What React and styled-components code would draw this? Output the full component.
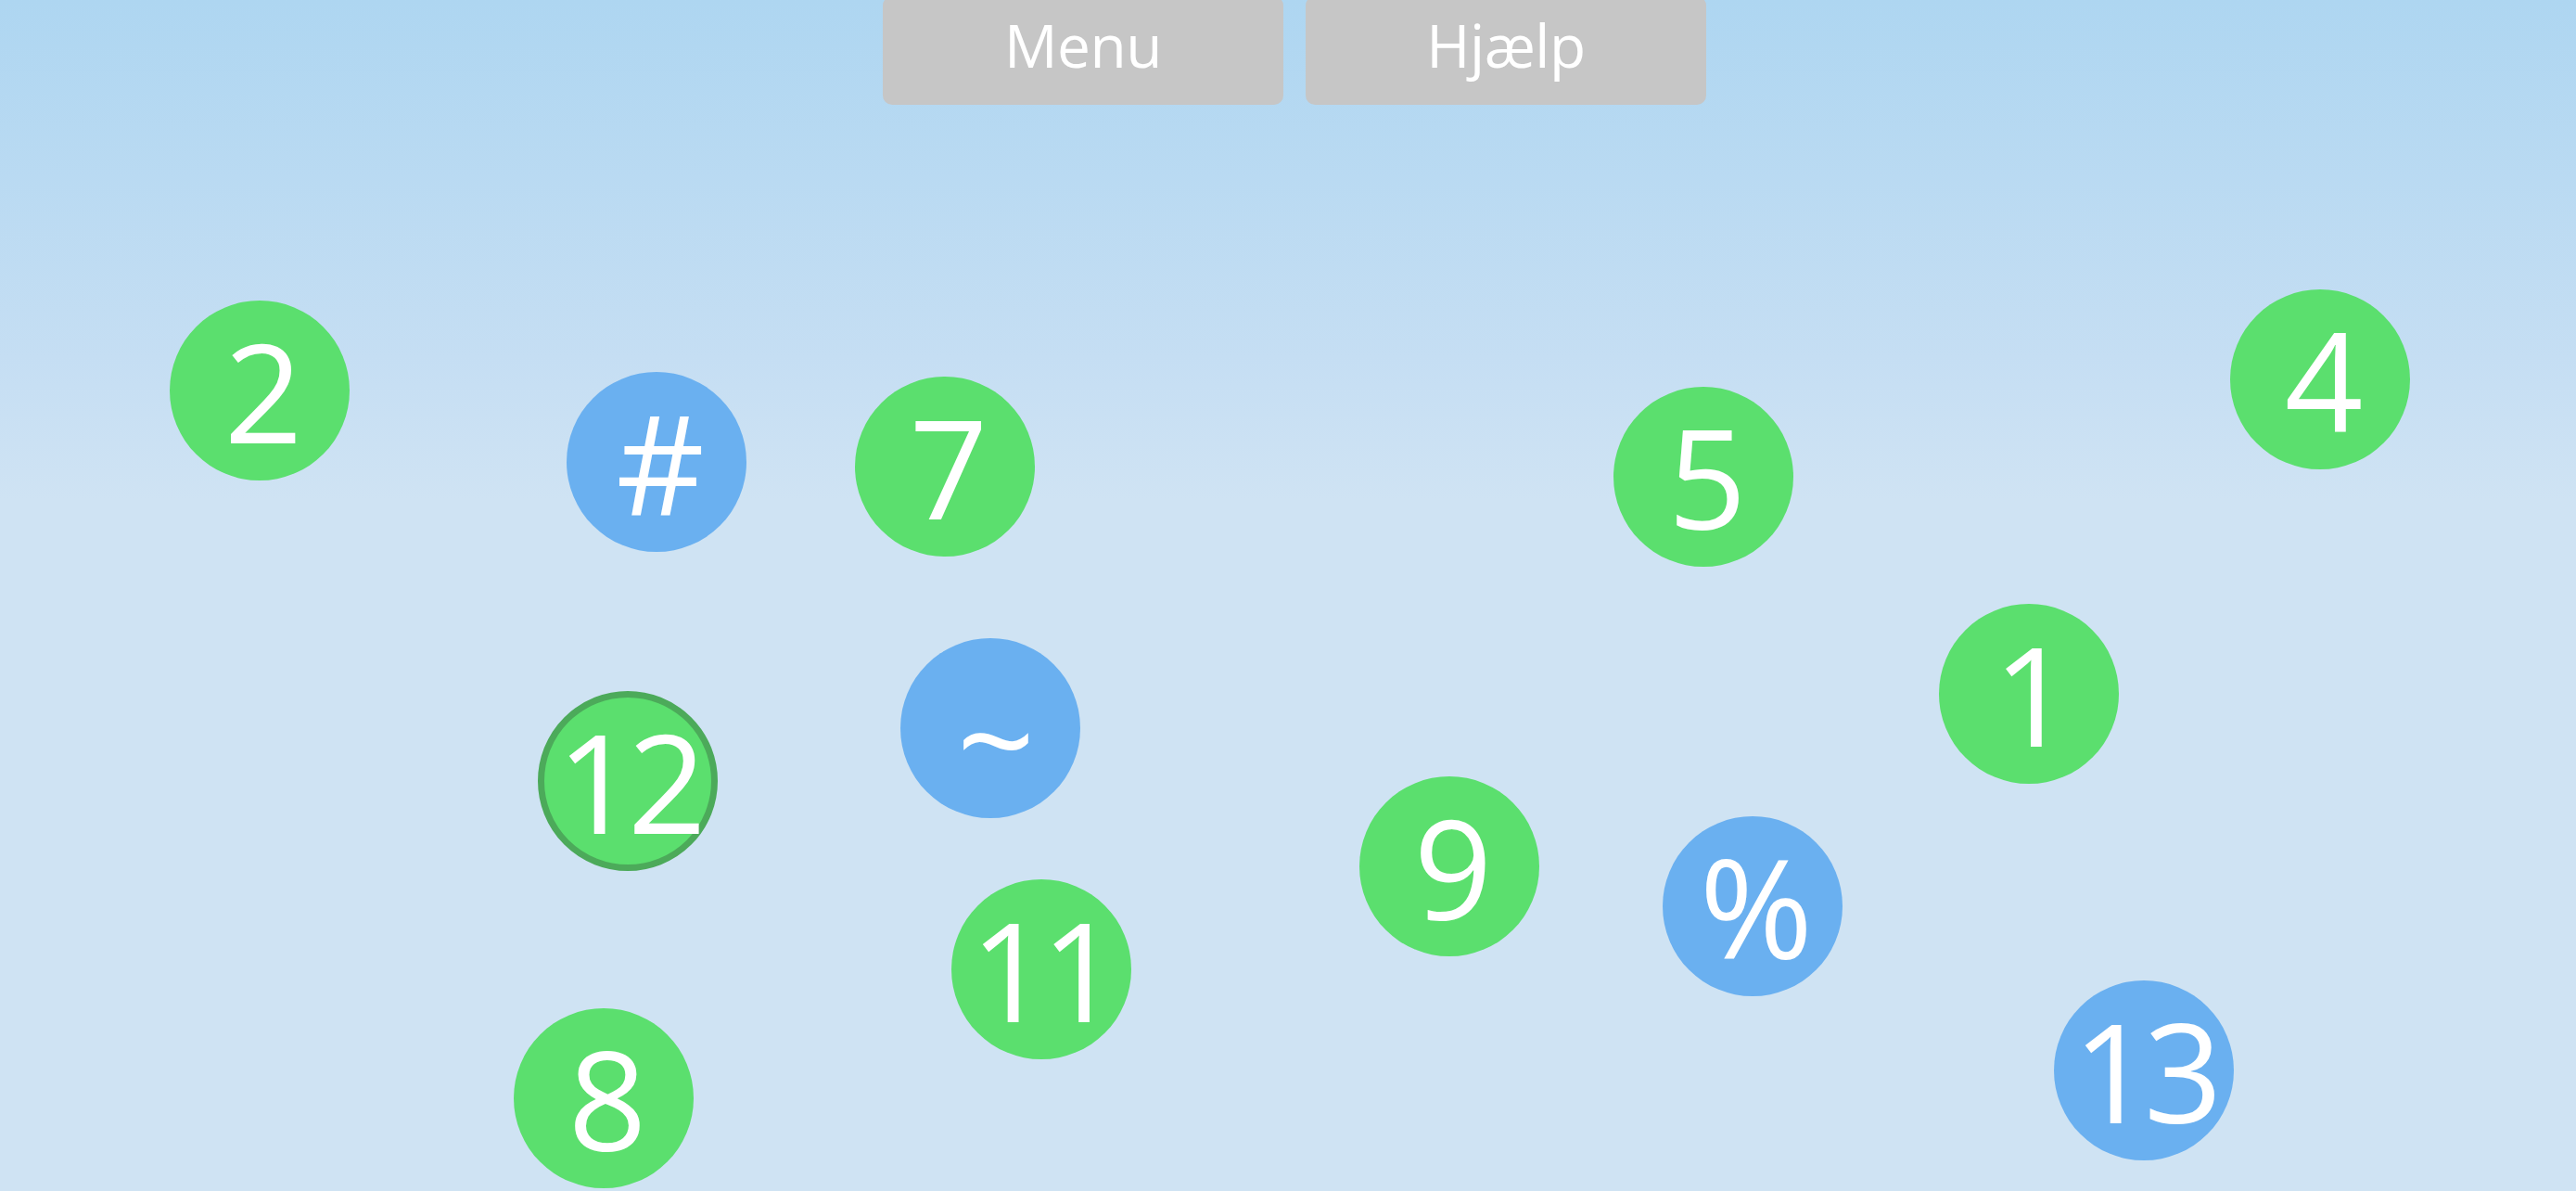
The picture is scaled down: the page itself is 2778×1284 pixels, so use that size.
import React from "react";
import styled, { createGlobalStyle } from "styled-components";

const GlobalStyle = createGlobalStyle`
  html, body {
    margin: 0;
    padding: 0;
    width: 100%;
    height: 100%;
    overflow: hidden;
  }
  #root {
    width: 100%;
    height: 100%;
  }
`;

const Page = styled.div`
  position: relative;
  width: 100vw;
  height: 100vh;
  overflow: hidden;
  background: linear-gradient(
    to bottom,
    #aed6f1 0%,
    #c5def3 30%,
    #cfe3f3 42%,
    #cfe3f3 100%
  );
  font-family: "Open Sans", "DejaVu Sans", sans-serif;
`;

const TopBar = styled.nav`
  position: relative;
  z-index: 2;
  display: flex;
  justify-content: center;
  gap: 24px;
  padding-left: 14px;
`;

const MenuButton = styled.button`
  width: 432px;
  height: 117px;
  margin-top: -4px;
  border: none;
  border-radius: 10px;
  background: #c6c6c6;
  color: #ffffff;
  font-family: "Open Sans", "DejaVu Sans", sans-serif;
  font-size: 64px;
  font-weight: 400;
  letter-spacing: -0.5px;
  display: flex;
  align-items: center;
  justify-content: center;
  padding: 0 0 12px;
  cursor: pointer;
`;

const Canvas = styled.div`
  position: absolute;
  inset: 0;
`;

const Bubble = styled.div`
  position: absolute;
  width: 194px;
  height: 194px;
  margin: -97px 0 0 -97px;
  box-sizing: border-box;
  border-radius: 50%;
  background: ${(p) => (p.$kind === "op" ? "#6ab0f0" : "#5bdf6e")};
  border: ${(p) => (p.$selected ? "7px solid #4caa5a" : "none")};
  display: flex;
  align-items: center;
  justify-content: center;
  color: #ffffff;
  font-family: "Open Sans", "DejaVu Sans", sans-serif;
  font-size: 148px;
  font-weight: 400;
  line-height: 1;
  letter-spacing: -8px;
  user-select: none;
`;

const Label = styled.span`
  display: block;
  transform: translate(${(p) => p.$dx || 0}px, ${(p) => p.$dy || 0}px);
`;

const bubbles = [
  { t: "2", x: 280, y: 421, kind: "num" },
  { t: "#", x: 708, y: 498, kind: "op" },
  { t: "7", x: 1019, y: 503, kind: "num" },
  { t: "~", x: 1068, y: 785, kind: "op", dy: 10, dx: 2 },
  { t: "12", x: 677, y: 842, kind: "num", selected: true },
  { t: "11", x: 1123, y: 1045, kind: "num" },
  { t: "8", x: 651, y: 1184, kind: "num" },
  { t: "9", x: 1563, y: 934, kind: "num" },
  { t: "5", x: 1837, y: 514, kind: "num" },
  { t: "%", x: 1890, y: 977, kind: "op" },
  { t: "1", x: 2188, y: 748, kind: "num" },
  { t: "4", x: 2502, y: 409, kind: "num" },
  { t: "13", x: 2312, y: 1154, kind: "op" },
];

export default function App() {
  return (
    <Page>
      <GlobalStyle />
      <Canvas>
        {bubbles.map((b, i) => (
          <Bubble
            key={i}
            $kind={b.kind}
            $selected={b.selected}
            style={{ left: b.x, top: b.y }}
          >
            <Label $dx={b.dx} $dy={b.dy}>
              {b.t}
            </Label>
          </Bubble>
        ))}
      </Canvas>
      <TopBar>
        <MenuButton>Menu</MenuButton>
        <MenuButton>Hjælp</MenuButton>
      </TopBar>
    </Page>
  );
}
